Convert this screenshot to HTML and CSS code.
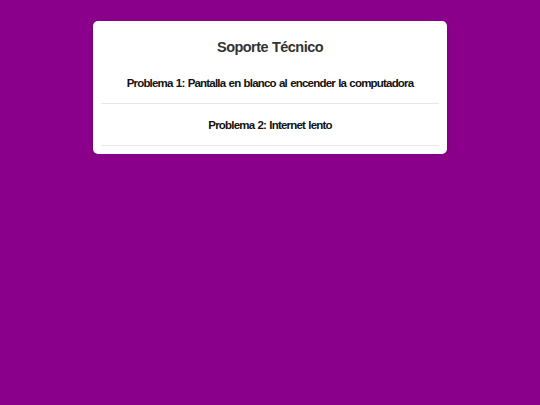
FILE: index.html
```html
<!DOCTYPE html>
<html lang="es">
<head>
<meta charset="utf-8">
<title>Soporte Técnico</title>
<link rel="stylesheet" href="styles.css">
</head>
<body>
<div class="card">
  <h1 class="title">Soporte Técnico</h1>
  <div class="item">Problema 1: Pantalla en blanco al encender la computadora</div>
  <div class="item">Problema 2: Internet lento</div>
</div>
</body>
</html>
```
FILE: styles.css
```css
html, body {
  margin: 0;
  padding: 0;
  background: #8b008b;
  font-family: "Liberation Sans", Arial, sans-serif;
}
body {
  padding-top: 21px;
}
.card {
  width: 354px;
  box-sizing: border-box;
  margin: 0 auto;
  background: #fff;
  border-radius: 5px;
  padding: 8px;
  box-shadow: 0 2px 4px rgba(0,0,0,0.2);
}
.title {
  margin: 9px 0 6px;
  font-size: 14.5px;
  letter-spacing: -0.55px;
  word-spacing: 0.6px;
  line-height: 18px;
  text-align: center;
  color: #333;
  font-weight: bold;
}
.item {
  padding: 14px 0 12px;
  line-height: 15px;
  font-size: 11.5px;
  letter-spacing: -0.8px;
  word-spacing: 0.8px;
  font-weight: bold;
  text-align: center;
  color: #111;
  border-bottom: 1px solid #e8e8e8;
}
```
